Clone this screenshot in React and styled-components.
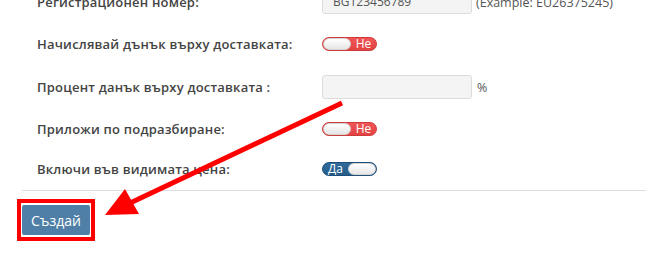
import React from "react";
import styled, { createGlobalStyle } from "styled-components";

const Global = createGlobalStyle`
  html, body { margin: 0; padding: 0; background: #fff; }
  body { font-family: "Open Sans", "Noto Sans", sans-serif; color: #444; }
`;

const Page = styled.div`
  position: relative;
  width: 646px;
  height: 261px;
  overflow: hidden;
  background: #fff;
`;

const Form = styled.div`
  margin-top: -10px;
  padding-left: 37px;
`;

const Row = styled.div`
  display: grid;
  grid-template-columns: 285px auto;
  align-items: center;
  height: 24px;
  margin-top: ${(p) => p.$mt || 0}px;
`;

const Label = styled.div`
  font-size: 13px;
  font-weight: 600;
  letter-spacing: 0.2px;
  color: #444;
  white-space: nowrap;
`;

const Control = styled.div`
  display: flex;
  align-items: center;
  gap: 4px;
`;

const Input = styled.div`
  box-sizing: border-box;
  width: 150px;
  height: 24px;
  background: #f4f4f4;
  border: 1px solid #dcdcdc;
  border-radius: 3px;
  padding: 0 10px;
  font-size: 12px;
  line-height: 22px;
  color: #555;
`;

const Hint = styled.span`
  font-size: 12.5px;
  color: #555;
  margin-left: ${(p) => p.$ml || 0}px;
`;

const Switch = styled.div`
  box-sizing: border-box;
  width: 55px;
  height: 14px;
  border-radius: 7px;
  border: 1px solid ${(p) => (p.$on ? "#1f4f78" : "#cf3b3b")};
  background: ${(p) =>
    p.$on
      ? "linear-gradient(#2f6a9a, #245d8c)"
      : "linear-gradient(#f05656, #e24343)"};
  display: flex;
  flex-direction: ${(p) => (p.$on ? "row" : "row-reverse")};
  align-items: center;
  overflow: hidden;
`;

const SwitchText = styled.span`
  flex: 1;
  text-align: center;
  color: #fff;
  font-size: 12px;
  line-height: 12px;
`;

const Knob = styled.span`
  box-sizing: border-box;
  width: 28px;
  height: 12px;
  border-radius: 6px;
  background: linear-gradient(#ffffff, #e6e6e6);
  border: 1px solid #d4d4d4;
`;

const Divider = styled.div`
  margin: 9px 0 0 22px;
  border-top: 1px solid #dedede;
`;

const Footer = styled.div`
  padding: 8px 0 0 17px;
`;

const Highlight = styled.div`
  display: inline-block;
  border: 4px solid #ff0000;
  padding: 2px 1px;
`;

const Button = styled.button`
  display: block;
  box-sizing: border-box;
  width: 68px;
  height: 30px;
  border: none;
  border-radius: 2px;
  background: #4f7fa7;
  color: #fff;
  font-family: "Open Sans", "Noto Sans", sans-serif;
  font-size: 14px;
  padding: 0;
`;

const Overlay = styled.svg`
  position: absolute;
  left: 0;
  top: 0;
  pointer-events: none;
`;

function Toggle({ on }) {
  return (
    <Switch $on={on}>
      <SwitchText>{on ? "Да" : "Не"}</SwitchText>
      <Knob />
    </Switch>
  );
}

export default function App() {
  return (
    <Page>
      <Global />
      <Form>
        <Row>
          <Label>Регистрационен номер:</Label>
          <Control>
            <Input>BG123456789</Input>
            <Hint>(Example: EU26375245)</Hint>
          </Control>
        </Row>
        <Row $mt={18}>
          <Label>Начислявай дънък върху доставката:</Label>
          <Control>
            <Toggle on={false} />
          </Control>
        </Row>
        <Row $mt={19}>
          <Label>Процент данък върху доставката :</Label>
          <Control>
            <Input />
            <Hint $ml={1}>%</Hint>
          </Control>
        </Row>
        <Row $mt={18}>
          <Label>Приложи по подразбиране:</Label>
          <Control>
            <Toggle on={false} />
          </Control>
        </Row>
        <Row $mt={16}>
          <Label>Включи във видимата цена:</Label>
          <Control>
            <Toggle on={true} />
          </Control>
        </Row>
      </Form>
      <Divider />
      <Footer>
        <Highlight>
          <Button>Създай</Button>
        </Highlight>
      </Footer>
      <Overlay width="646" height="261" viewBox="0 0 646 261">
        <line x1="342" y1="103" x2="128" y2="204" stroke="#ff0000" strokeWidth="5" />
        <polygon points="105,215 125,189 139,214" fill="#ff0000" />
      </Overlay>
    </Page>
  );
}
